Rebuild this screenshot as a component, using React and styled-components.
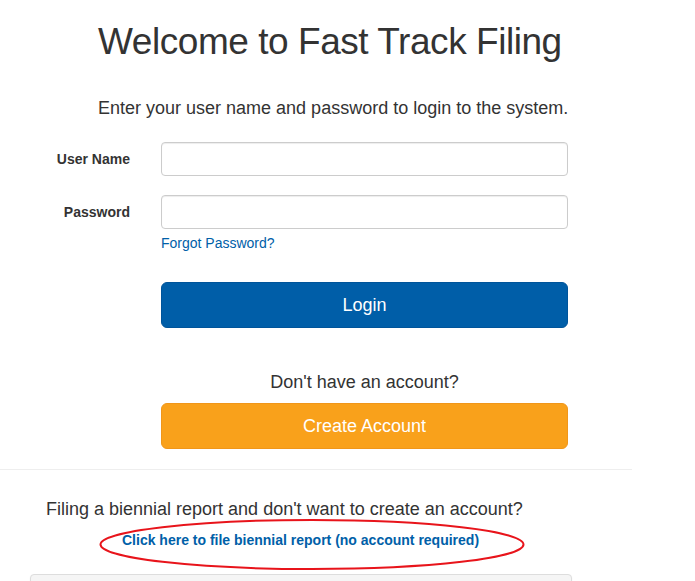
import React from 'react';
import styled, { createGlobalStyle } from 'styled-components';

const GlobalStyle = createGlobalStyle`
  html, body {
    margin: 0;
    padding: 0;
    background: #ffffff;
    font-family: "Liberation Sans", Arial, Helvetica, sans-serif;
    color: #333333;
    overflow: hidden;
  }
`;

const Page = styled.div`
  width: 695px;
  height: 581px;
  overflow: hidden;
`;

const Main = styled.div`
  width: 632px;
  padding-top: 20px;
`;

const Title = styled.h1`
  margin: 0 0 0 98px;
  font-size: 37px;
  font-weight: 400;
  line-height: 44px;
  color: #333;
  letter-spacing: -0.45px;
`;

const Lead = styled.p`
  margin: 32px 0 0 98px;
  font-size: 18px;
  line-height: 24px;
`;

const Form = styled.form`
  display: flex;
  flex-direction: column;
  margin-top: 22px;
`;

const Row = styled.div`
  display: flex;
  align-items: flex-start;
  margin-bottom: ${p => p.$gap || 0}px;
`;

const Label = styled.label`
  width: 161px;
  padding-right: 31px;
  box-sizing: border-box;
  text-align: right;
  font-size: 14px;
  font-weight: 700;
  line-height: 34px;
`;

const Field = styled.div`
  width: 407px;
  display: flex;
  flex-direction: column;
`;

const Input = styled.input`
  height: 34px;
  box-sizing: border-box;
  border: 1px solid #cccccc;
  border-radius: 4px;
  box-shadow: inset 0 1px 1px rgba(0, 0, 0, 0.075);
  padding: 6px 12px;
  font-size: 14px;
  outline: none;
`;

const Link = styled.a`
  color: #0060a8;
  text-decoration: none;
  font-size: 14px;
  line-height: 20px;
  margin-top: 4px;
`;

const Button = styled.button`
  height: 46px;
  width: 100%;
  border: 1px solid ${p => p.$border};
  border-radius: 6px;
  background: ${p => p.$bg};
  color: #fff;
  font-family: inherit;
  font-size: 18px;
  cursor: pointer;
`;

const Question = styled.div`
  font-size: 18px;
  line-height: 24px;
  margin-bottom: 9px;
  text-align: center;
`;

const Divider = styled.hr`
  width: 632px;
  margin: 20px 0 0 0;
  border: 0;
  border-top: 1px solid #eeeeee;
`;

const Biennial = styled.div`
  position: relative;
  width: 600px;
  padding-top: 27px;
`;

const BiennialText = styled.div`
  margin-left: 46px;
  font-size: 18px;
  line-height: 24px;
`;

const BiennialLink = styled.a`
  display: block;
  margin: 9px 0 0 122px;
  color: #0060a8;
  font-size: 14px;
  font-weight: 700;
  line-height: 20px;
  text-decoration: none;
`;

const Ring = styled.svg`
  position: absolute;
  left: 99px;
  top: 48px;
  pointer-events: none;
`;

const Panel = styled.div`
  margin: 24px 0 0 30px;
  width: 540px;
  height: 20px;
  border: 1px solid #dddddd;
  border-radius: 4px;
  background: #f5f5f5;
  box-shadow: 0 1px 2px rgba(0, 0, 0, 0.05);
`;

export default function App() {
  return (
    <Page>
      <GlobalStyle />
      <Main>
        <Title>Welcome to Fast Track Filing</Title>
        <Lead>Enter your user name and password to login to the system.</Lead>
        <Form onSubmit={e => e.preventDefault()}>
          <Row $gap={19}>
            <Label>User Name</Label>
            <Field><Input type="text" /></Field>
          </Row>
          <Row $gap={29}>
            <Label>Password</Label>
            <Field>
              <Input type="password" />
              <Link href="#">Forgot Password?</Link>
            </Field>
          </Row>
          <Row $gap={42}>
            <Label />
            <Field>
              <Button type="submit" $bg="#005ea8" $border="#00549a">Login</Button>
            </Field>
          </Row>
          <Row>
            <Label />
            <Field>
              <Question>Don't have an account?</Question>
              <Button type="button" $bg="#f9a11b" $border="#f0961a">Create Account</Button>
            </Field>
          </Row>
        </Form>
        <Divider />
        <Biennial>
          <BiennialText>Filing a biennial report and don't want to create an account?</BiennialText>
          <BiennialLink href="#">Click here to file biennial report (no account required)</BiennialLink>
          <Ring width="428" height="54" viewBox="0 0 428 54">
            <ellipse cx="213" cy="26.5" rx="211.5" ry="24.5" fill="none" stroke="#e8141b" strokeWidth="2" />
          </Ring>
        </Biennial>
        <Panel />
      </Main>
    </Page>
  );
}
